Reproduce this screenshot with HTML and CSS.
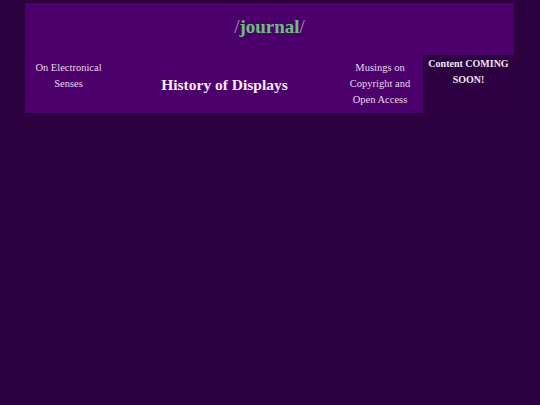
FILE: index.html
```html
<!DOCTYPE html>
<html>
<head>
<meta charset="utf-8">
<link rel="stylesheet" href="styles.css">
</head>
<body>
<div class="page">
  <header class="masthead">
    <h1 class="title"><span class="slash">/</span><span class="word">journal</span><span class="slash">/</span></h1>
  </header>
  <nav class="row">
    <div class="cell side">On Electronical<br>Senses</div>
    <div class="cell main">History of Displays</div>
    <div class="cell side">Musings on<br>Copyright and<br>Open Access</div>
    <div class="cell soon">Content COMING<br>SOON!</div>
  </nav>
</div>
</body>
</html>
```
FILE: styles.css
```css
html, body {
  margin: 0;
  padding: 0;
  background: #2a003f;
  height: 100%;
}
body {
  font-family: "Liberation Serif", "Times New Roman", serif;
  color: #ead6ee;
}
.page {
  padding: 3px 26px 0 25px;
}
.masthead {
  background: #4c006b;
  height: 52px;
  display: flex;
  align-items: center;
  justify-content: center;
}
.title {
  margin: 0;
  font-size: 19px;
  font-weight: bold;
  line-height: 1;
  padding-bottom: 6px;
}
.slash {
  color: #a89ab8;
  font-weight: normal;
}
.word {
  color: #6fbd7e;
}
.row {
  display: grid;
  grid-template-columns: 87px 225px 86px 91px;
  height: 58px;
}
.cell {
  background: #4c006b;
  display: flex;
  justify-content: center;
  text-align: center;
  font-size: 10.5px;
  line-height: 16px;
}
.side {
  align-items: flex-start;
  padding-top: 5px;
}
.main {
  align-items: center;
  font-size: 15.5px;
  font-weight: bold;
  color: #f6eaf4;
  padding-top: 2px;
}
.soon {
  background: #2c0040;
  align-items: flex-start;
  font-weight: bold;
  color: #f0e4ee;
  font-size: 10px;
  padding-top: 1px;
}
```
